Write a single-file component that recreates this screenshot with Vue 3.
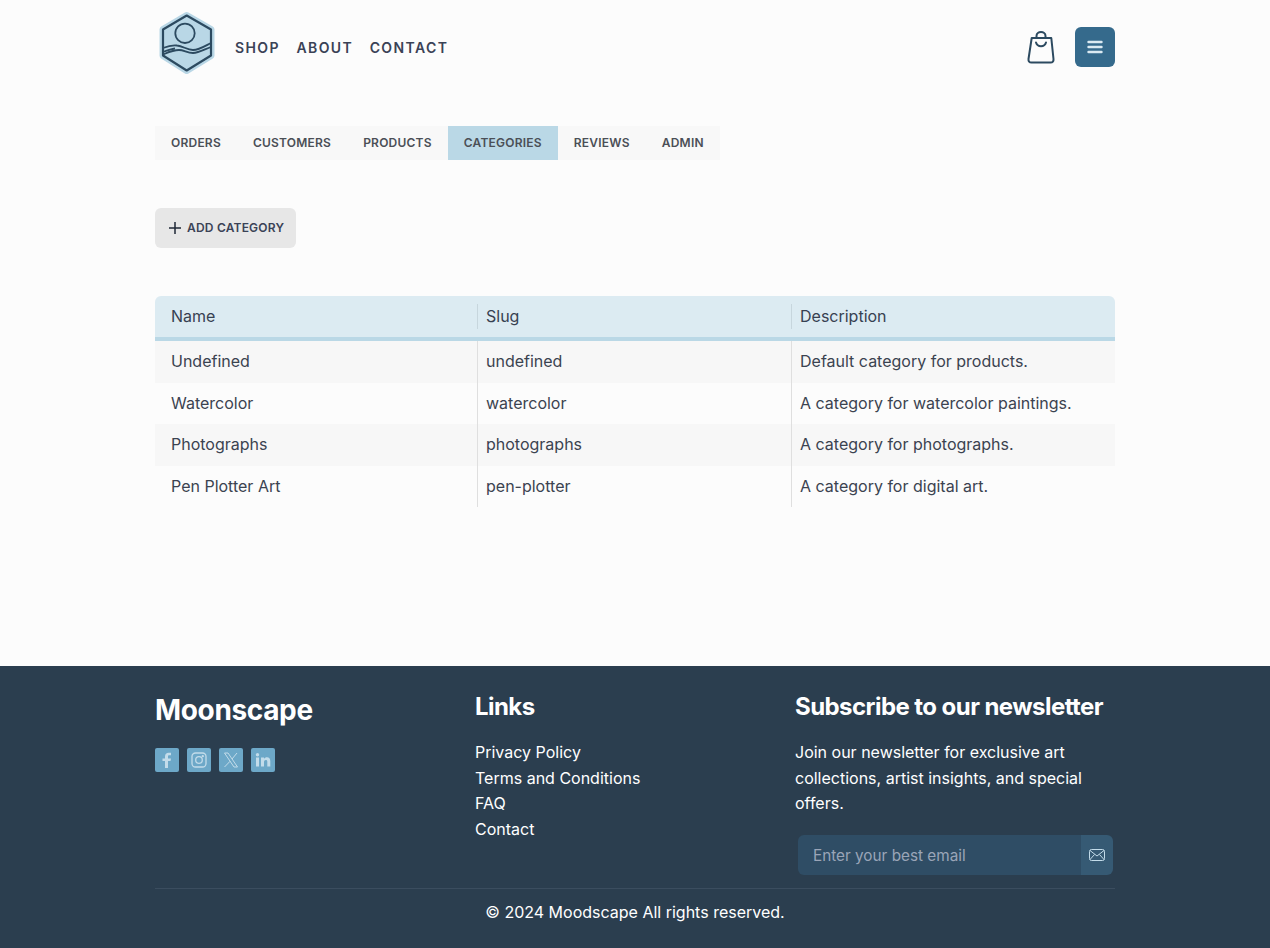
<template>
  <div class="page">
    <header class="topbar">
      <div class="topbar-left">
        <svg class="logo" width="62" height="66" viewBox="0 0 62 66" fill="none">
          <path d="M31.700 5.500 L56 19.500 V45.500 L31.700 60.500 L8 45.500 V19.500 Z" fill="#b9d7e6" stroke="#b9d7e6" stroke-width="7" stroke-linejoin="round"/>
          <path d="M31.700 5.500 L56 19.500 V45.500 L31.700 60.500 L8 45.500 V19.500 Z" stroke="#2c4a60" stroke-width="2.200" stroke-linejoin="round"/>
          <circle cx="30" cy="23.300" r="9.700" stroke="#2c4a60" stroke-width="1.800"/>
          <path d="M8 38 C13 36 18 35 22 35.500 C28 36 32 40 38 40 C44 40 50 36 56 33" stroke="#2c4a60" stroke-width="1.800"/>
          <path d="M8 44.500 C14 42 18 40 24 40 C29 40 32 43 38 43 C44 43 50 39 56 37" stroke="#2c4a60" stroke-width="1.800"/>
          <path d="M8 42 C12 40.500 16 39 20 38.500" stroke="#2c4a60" stroke-width="1.800"/>
        </svg>
        <nav class="mainnav">
          <a>SHOP</a>
          <a>ABOUT</a>
          <a>CONTACT</a>
        </nav>
      </div>
      <div class="topbar-right">
        <svg width="30" height="34" viewBox="0 0 30 34" fill="none" stroke="#2c4a60" stroke-width="2" stroke-linecap="round" stroke-linejoin="round">
          <path d="M5.700 8 H25.300 L27.500 29 Q27.800 32.500 24.500 32.500 H5.500 Q2.200 32.500 2.500 29 Z"/>
          <path d="M10.500 8 V6 C10.500 .8 19.500 .8 19.500 6 V8"/>
          <path d="M10 12.500 C11.500 17.500 18.500 17.500 20 12.500"/>
        </svg>
        <button class="menu-btn">
          <svg width="16" height="14" viewBox="0 0 16 14" fill="none" stroke="#dbeaf2" stroke-width="2.400" stroke-linecap="round">
            <path d="M1.500 2 H14.500 M1.500 7 H14.500 M1.500 12 H14.500"/>
          </svg>
        </button>
      </div>
    </header>

    <main class="content">
      <div class="tabs">
        <a v-for="t in tabs" :key="t" class="tab" :class="{ active: t === 'CATEGORIES' }">{{ t }}</a>
      </div>

      <button class="add-btn">
        <svg width="12" height="12" viewBox="0 0 12 12" fill="none" stroke="#1f2937" stroke-width="1.500">
          <path d="M6 0 V12 M0 6 H12"/>
        </svg>
        <span>ADD CATEGORY</span>
      </button>

      <table class="cat-table">
        <colgroup>
          <col class="col-name" />
          <col class="col-slug" />
          <col />
        </colgroup>
        <thead>
          <tr>
            <th>Name</th>
            <th>Slug</th>
            <th>Description</th>
          </tr>
        </thead>
        <tbody>
          <tr v-for="c in categories" :key="c.slug">
            <td>{{ c.name }}</td>
            <td>{{ c.slug }}</td>
            <td>{{ c.description }}</td>
          </tr>
        </tbody>
      </table>
    </main>

    <footer class="footer">
      <div class="footer-inner">
        <div class="footer-cols">
          <div>
            <h2 class="brand">Moonscape</h2>
            <div class="socials">
              <a class="social">
                <svg width="14" height="16" viewBox="0 0 14 16" fill="#c3dcea"><path d="M5 16 V9 H2.500 V6.500 H5 V4.500 C5 2 6.500 .8 8.500 .8 H11 V3.300 H9.300 C8.300 3.300 8 3.800 8 4.600 V6.500 H11 L10.500 9 H8 V16 Z"/></svg>
              </a>
              <a class="social">
                <svg width="16" height="16" viewBox="0 0 16 16" fill="none" stroke="#c3dcea" stroke-width="1.300">
                  <rect x="1" y="1" width="14" height="14" rx="3.500"/>
                  <circle cx="8" cy="8" r="3.300"/>
                  <circle cx="11.800" cy="4.200" r=".5" fill="#c3dcea"/>
                </svg>
              </a>
              <a class="social">
                <svg width="16" height="16" viewBox="0 0 16 16" fill="none" stroke="#c3dcea" stroke-width="1">
                  <path d="M1.500 1 H5 L14.500 15 H11 Z"/>
                  <path d="M14 1 L9 7 M7 9.300 L1.500 15"/>
                </svg>
              </a>
              <a class="social">
                <svg width="16" height="16" viewBox="0 0 16 16" fill="#c3dcea">
                  <rect x="1" y="5.500" width="3" height="9"/>
                  <circle cx="2.500" cy="2.800" r="1.700"/>
                  <path d="M6 5.500 H9 V6.800 C9.600 5.900 10.600 5.300 12 5.300 C14.200 5.300 15.300 6.700 15.300 9.200 V14.500 H12.300 V9.700 C12.300 8.500 11.800 7.900 10.800 7.900 C9.700 7.900 9 8.600 9 9.900 V14.500 H6 Z"/>
                </svg>
              </a>
            </div>
          </div>
          <div>
            <h3 class="col-title">Links</h3>
            <ul class="links">
              <li>Privacy Policy</li>
              <li>Terms and Conditions</li>
              <li>FAQ</li>
              <li>Contact</li>
            </ul>
          </div>
          <div>
            <h3 class="col-title">Subscribe to our newsletter</h3>
            <p class="blurb">Join our newsletter for exclusive art collections, artist insights, and special offers.</p>
            <form class="signup" @submit.prevent>
              <input type="email" placeholder="Enter your best email" />
              <button type="submit" class="signup-btn">
                <svg width="16" height="12" viewBox="0 0 16 12" fill="none" stroke="#c3dcea" stroke-width="1">
                  <rect x=".5" y=".5" width="15" height="11" rx="2"/>
                  <path d="M1 1.500 L8 7 L15 1.500 M1 10.500 L5.500 5.500 M15 10.500 L10.500 5.500"/>
                </svg>
              </button>
            </form>
          </div>
        </div>
        <div class="copyright">© 2024 Moodscape All rights reserved.</div>
      </div>
    </footer>
  </div>
</template>

<script setup>
const tabs = ['ORDERS', 'CUSTOMERS', 'PRODUCTS', 'CATEGORIES', 'REVIEWS', 'ADMIN']

const categories = [
  { name: 'Undefined', slug: 'undefined', description: 'Default category for products.' },
  { name: 'Watercolor', slug: 'watercolor', description: 'A category for watercolor paintings.' },
  { name: 'Photographs', slug: 'photographs', description: 'A category for photographs.' },
  { name: 'Pen Plotter Art', slug: 'pen-plotter', description: 'A category for digital art.' }
]
</script>

<style>
html, body {
  margin: 0;
  background: #fcfcfc;
}
</style>

<style scoped>
.page {
  font-family: Inter, "Liberation Sans", sans-serif;
  color: #374151;
  width: 1270px;
  height: 948px;
  display: flex;
  flex-direction: column;
  background: #fcfcfc;
  overflow: hidden;
}

.topbar {
  width: 960px;
  margin: 0 auto;
  height: 94px;
  display: flex;
  align-items: center;
  justify-content: space-between;
  box-sizing: border-box;
}

.topbar-left {
  display: flex;
  align-items: center;
}

.logo {
  display: block;
  margin-right: 18px;
  margin-bottom: 8px;
}

.mainnav {
  display: flex;
  gap: 16.500px;
}

.mainnav a {
  font-size: 14px;
  font-weight: 600;
  letter-spacing: 1.400px;
  color: #3a4256;
}

.topbar-right {
  display: flex;
  align-items: center;
  gap: 19px;
}

.menu-btn {
  width: 40px;
  height: 40px;
  border: none;
  border-radius: 6px;
  background: #356a8c;
  display: flex;
  align-items: center;
  justify-content: center;
  padding: 0;
}

.content {
  flex: 1;
  width: 960px;
  margin: 0 auto;
  padding-top: 32px;
  box-sizing: border-box;
}

.tabs {
  display: inline-flex;
  background: #f8f8f8;
  height: 34px;
  vertical-align: top;
}

.tab {
  padding: 0 16px;
  font-size: 12px;
  font-weight: 600;
  letter-spacing: 0.220px;
  line-height: 34px;
  color: #4b4f56;
}

.tab.active {
  background: #bad8e6;
}

.add-btn {
  display: flex;
  align-items: center;
  gap: 6px;
  margin-top: 48px;
  height: 40px;
  padding: 0 12px 0 14px;
  border: none;
  border-radius: 6px;
  background: #e7e7e7;
  font-family: inherit;
  font-size: 12px;
  font-weight: 600;
  letter-spacing: 0.200px;
  color: #3a4256;
}

.add-btn span {
  margin-top: -2px;
}

.cat-table {
  width: 960px;
  margin-top: 48px;
  border-collapse: separate;
  border-spacing: 0;
  table-layout: fixed;
  font-size: 16px;
}

.col-name {
  width: 322px;
}

.col-slug {
  width: 314px;
}

.cat-table th {
  padding: 0 8px 2px;
  box-sizing: border-box;
  height: 45px;
  background: #dcebf2;
  border-bottom: 4px solid #bad8e6;
  text-align: left;
  font-weight: 400;
  color: #374151;
  position: relative;
}

.cat-table th:first-child {
  padding-left: 16px;
  border-top-left-radius: 6px;
}

.cat-table th:last-child {
  border-top-right-radius: 6px;
}

.cat-table th + th {
  padding-left: 9px;
}

.cat-table th + th::before {
  content: "";
  position: absolute;
  left: 0;
  top: 8px;
  bottom: 8px;
  width: 1px;
  background: #c7d6dd;
}

.cat-table td {
  height: 41.600px;
  padding: 0 8px 1px;
  box-sizing: border-box;
  color: #3b4350;
}

.cat-table td:first-child {
  padding-left: 16px;
}

.cat-table td + td {
  border-left: 1px solid #dfdfdf;
}

.cat-table tbody tr:nth-child(odd) td {
  background: #f7f7f7;
}

.footer {
  height: 282px;
  background: #2b3e4f;
  color: #fff;
}

.footer-inner {
  width: 960px;
  margin: 0 auto;
  height: 100%;
  display: flex;
  flex-direction: column;
}

.footer-cols {
  display: grid;
  grid-template-columns: repeat(3, 320px);
  height: 223px;
  border-bottom: 1px solid #3b4d5f;
  box-sizing: border-box;
  padding-top: 24px;
}

.brand {
  margin: 0;
  font-size: 28px;
  font-weight: 700;
  line-height: 40px;
  letter-spacing: -0.350px;
  color: #fff;
}

.socials {
  display: flex;
  gap: 8px;
  margin-top: 18px;
}

.social {
  width: 24px;
  height: 24px;
  background: #6da8c8;
  border-radius: 2px;
  display: flex;
  align-items: center;
  justify-content: center;
}

.col-title {
  margin: 1px 0 0;
  font-size: 24px;
  font-weight: 700;
  line-height: 32px;
  letter-spacing: -0.560px;
}

.links {
  list-style: none;
  margin: 17px 0 0;
  padding: 0;
  font-size: 16px;
  font-weight: 400;
  line-height: 25.600px;
}

.blurb {
  margin: 17px 0 0;
  font-size: 16px;
  font-weight: 400;
  line-height: 25.600px;
}

.signup {
  display: flex;
  width: 315px;
  height: 40px;
  margin: 18px 0 0 3px;
}

.signup input {
  flex: 1;
  min-width: 0;
  border: none;
  outline: none;
  background: #2f4d65;
  border-radius: 6px 0 0 6px;
  padding: 1px 15px 0;
  font-family: inherit;
  font-size: 15.300px;
  color: #fff;
}

.signup input::placeholder {
  color: #9aa5b8;
  opacity: 1;
}

.signup-btn {
  width: 32px;
  padding: 0;
  border: none;
  border-radius: 0 6px 6px 0;
  background: #365a74;
  display: flex;
  align-items: center;
  justify-content: center;
}

.copyright {
  text-align: center;
  font-size: 16px;
  font-weight: 400;
  line-height: 47px;
}
</style>
